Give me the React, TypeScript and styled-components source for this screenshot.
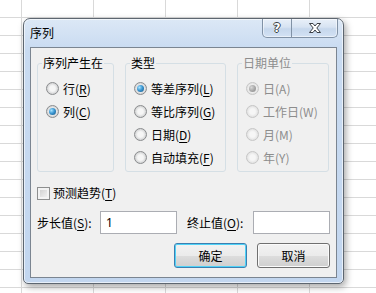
import React from "react";
import styled, { createGlobalStyle, css } from "styled-components";

const GlobalStyle = createGlobalStyle`
  html, body { margin: 0; padding: 0; }
  body {
    font-family: "Noto Sans CJK SC", "Noto Sans", sans-serif;
    font-size: 12px;
    color: #000;
  }
  u { text-underline-offset: 2px; text-decoration-thickness: 1px; }
`;

const Sheet = styled.div`
  width: 376px;
  height: 293px;
  box-sizing: border-box;
  padding: 18px 0 0 23px;
  overflow: hidden;
  background-color: #ffffff;
  background-image: linear-gradient(to right, #d9d9d9 1px, transparent 1px),
    linear-gradient(to bottom, #d9d9d9 1px, transparent 1px);
  background-size: 72px 100%, 100% 18px;
  background-position: 21px 0, 0 17px;
`;

const Dialog = styled.div`
  width: 321px;
  height: 266px;
  box-sizing: border-box;
  border: 1px solid #5d6670;
  border-radius: 7px 7px 5px 5px;
  background: linear-gradient(to bottom, #dce8f6 0px, #c9dbf1 30px, #c2d6ef 100%);
  box-shadow: inset 0 0 0 1px rgba(255, 255, 255, 0.6), 2px 3px 7px rgba(0, 0, 0, 0.35);
  display: flex;
  flex-direction: column;
`;

const TitleBar = styled.div`
  height: 28px;
  display: flex;
  align-items: center;
  padding: 0 5px 0 6px;
`;

const Title = styled.span`
  font-size: 12px;
  line-height: 14px;
  color: #000;
`;

const CaptionButtons = styled.div`
  margin-left: auto;
  align-self: flex-start;
  display: flex;
  height: 18px;
  border: 1px solid #8192a6;
  border-top: none;
  border-radius: 0 0 5px 5px;
  overflow: hidden;
  background: linear-gradient(#e9f0f9 0%, #d7e3f2 45%, #c6d7ec 55%, #d3e2f4 100%);
  box-shadow: inset 0 0 0 1px rgba(255, 255, 255, 0.5);
`;

const CaptionButton = styled.div<{ $w: number }>`
  width: ${(p) => p.$w}px;
  display: flex;
  align-items: center;
  justify-content: center;
  & + & {
    border-left: 1px solid #8192a6;
  }
`;

const HelpGlyph = styled.span`
  font-family: "DejaVu Sans", sans-serif;
  font-weight: bold;
  font-size: 12px;
  line-height: 12px;
  color: #fff;
  text-shadow: 1px 0 0 #3a3f45, -1px 0 0 #3a3f45, 0 1px 0 #3a3f45, 0 -1px 0 #3a3f45;
`;

const Client = styled.div`
  margin: 0 6px;
  height: 231px;
  box-sizing: border-box;
  border: 1px solid #7b8591;
  background: #f0f0f0;
  padding: 8px 6px 0 6px;
  display: flex;
  flex-direction: column;
`;

const Groups = styled.div`
  display: grid;
  grid-template-columns: 77px 101px 92px;
  column-gap: 11px;
`;

const Group = styled.fieldset`
  margin: 0;
  padding: 7px 2px 0 8px;
  height: 116px;
  box-sizing: border-box;
  border: 1px solid #d5dfe5;
  border-radius: 3px;
  min-width: 0;
`;

const Legend = styled.legend<{ $disabled?: boolean }>`
  padding: 0 1px;
  margin-left: -4px;
  font-size: 12px;
  line-height: 14px;
  color: ${(p) => (p.$disabled ? "#8d8d8d" : "#000")};
`;

const Option = styled.div<{ $disabled?: boolean }>`
  display: flex;
  align-items: center;
  gap: 4px;
  height: 23px;
  white-space: nowrap;
  line-height: 14px;
  color: ${(p) => (p.$disabled ? "#8d8d8d" : "#000")};
`;

const RadioMark = styled.span<{ $checked?: boolean; $disabled?: boolean }>`
  position: relative;
  flex: none;
  width: 13px;
  height: 13px;
  box-sizing: border-box;
  border-radius: 50%;
  border: 1px solid ${(p) => (p.$disabled ? "#c6c6c6" : "#8a8c8e")};
  background: ${(p) =>
    p.$disabled
      ? "radial-gradient(circle, #f6f6f6 0 35%, #e3e3e3 70%, #f2f2f2 100%)"
      : "radial-gradient(circle, #f6f6f6 0 35%, #d2d3d4 72%, #eeeeee 100%)"};
  ${(p) =>
    p.$checked &&
    css`
      &::after {
        content: "";
        position: absolute;
        left: 2px;
        top: 2px;
        width: 7px;
        height: 7px;
        border-radius: 50%;
        background: ${p.$disabled
          ? "radial-gradient(circle at 35% 35%, #d8d8d8 0, #a5a5a5 55%, #8a8a8a 100%)"
          : "radial-gradient(circle at 35% 35%, #a8e4ff 0, #3d98d3 45%, #11507f 100%)"};
      }
    `}
`;

const CheckRow = styled.div`
  margin-top: 13px;
  height: 16px;
  display: flex;
  align-items: center;
  gap: 3px;
  line-height: 14px;
`;

const CheckMark = styled.span`
  flex: none;
  width: 13px;
  height: 13px;
  box-sizing: border-box;
  border: 1px solid #8e8f8f;
  background: linear-gradient(135deg, #c9c9c9 0%, #e6e6e6 60%, #f6f6f6 100%);
  box-shadow: inset 0 0 0 2px #f3f3f3;
`;

const FieldRow = styled.div`
  margin-top: 10px;
  display: flex;
  align-items: center;
  height: 23px;
`;

const FieldLabel = styled.span<{ $w: number; $gap?: number }>`
  width: ${(p) => p.$w}px;
  margin-left: ${(p) => p.$gap ?? 0}px;
  flex: none;
  line-height: 14px;
  white-space: nowrap;
`;

const TextBox = styled.div`
  width: 77px;
  height: 23px;
  box-sizing: border-box;
  border: 1px solid #abadb3;
  background: #fff;
  padding-left: 5px;
  display: flex;
  align-items: center;
  font-family: "Noto Sans", "Noto Sans CJK SC", sans-serif;
  font-size: 12px;
`;

const ButtonRow = styled.div`
  margin-top: 9px;
  display: flex;
  justify-content: flex-end;
  gap: 10px;
`;

const Button = styled.div<{ $default?: boolean }>`
  width: 73px;
  height: 25px;
  box-sizing: border-box;
  border-radius: 3px;
  border: 1px solid ${(p) => (p.$default ? "#3c7fb1" : "#707070")};
  background: linear-gradient(#f2f2f2 0%, #ebebeb 50%, #dddddd 51%, #cfcfcf 100%);
  box-shadow: ${(p) => (p.$default ? "inset 0 0 0 1px #4fd2f7" : "inset 0 0 0 1px #fbfbfb")};
  display: flex;
  align-items: center;
  justify-content: center;
  line-height: 14px;
`;

type Opt = { label: string; key: string; checked?: boolean };

function OptionList({ items, disabled }: { items: Opt[]; disabled?: boolean }) {
  return (
    <>
      {items.map((o) => (
        <Option key={o.label} $disabled={disabled}>
          <RadioMark $checked={o.checked} $disabled={disabled} />
          <span>
            {o.label}(
            {disabled ? o.key : <u>{o.key}</u>})
          </span>
        </Option>
      ))}
    </>
  );
}

export default function App() {
  return (
    <>
      <GlobalStyle />
      <Sheet>
        <Dialog>
          <TitleBar>
            <Title>序列</Title>
            <CaptionButtons>
              <CaptionButton $w={28}>
                <HelpGlyph>?</HelpGlyph>
              </CaptionButton>
              <CaptionButton $w={45}>
                <svg width="14" height="10" viewBox="0 0 14 10">
                  <path
                    d="M1.5 0.5 H5 L7 3 L9 0.5 H12.5 L8.8 5 L12.5 9.5 H9 L7 7 L5 9.5 H1.5 L5.2 5 Z"
                    fill="#ffffff"
                    stroke="#3a3f45"
                    strokeWidth="1"
                    strokeLinejoin="round"
                  />
                </svg>
              </CaptionButton>
            </CaptionButtons>
          </TitleBar>
          <Client>
            <Groups>
              <Group>
                <Legend>序列产生在</Legend>
                <OptionList
                  items={[
                    { label: "行", key: "R" },
                    { label: "列", key: "C", checked: true },
                  ]}
                />
              </Group>
              <Group>
                <Legend>类型</Legend>
                <OptionList
                  items={[
                    { label: "等差序列", key: "L", checked: true },
                    { label: "等比序列", key: "G" },
                    { label: "日期", key: "D" },
                    { label: "自动填充", key: "F" },
                  ]}
                />
              </Group>
              <Group>
                <Legend $disabled>日期单位</Legend>
                <OptionList
                  disabled
                  items={[
                    { label: "日", key: "A", checked: true },
                    { label: "工作日", key: "W" },
                    { label: "月", key: "M" },
                    { label: "年", key: "Y" },
                  ]}
                />
              </Group>
            </Groups>
            <CheckRow>
              <CheckMark />
              <span>
                预测趋势(<u>T</u>)
              </span>
            </CheckRow>
            <FieldRow>
              <FieldLabel $w={63}>
                步长值(<u>S</u>):
              </FieldLabel>
              <TextBox>1</TextBox>
              <FieldLabel $w={66} $gap={10}>
                终止值(<u>O</u>):
              </FieldLabel>
              <TextBox />
            </FieldRow>
            <ButtonRow>
              <Button $default>确定</Button>
              <Button>取消</Button>
            </ButtonRow>
          </Client>
        </Dialog>
      </Sheet>
    </>
  );
}
